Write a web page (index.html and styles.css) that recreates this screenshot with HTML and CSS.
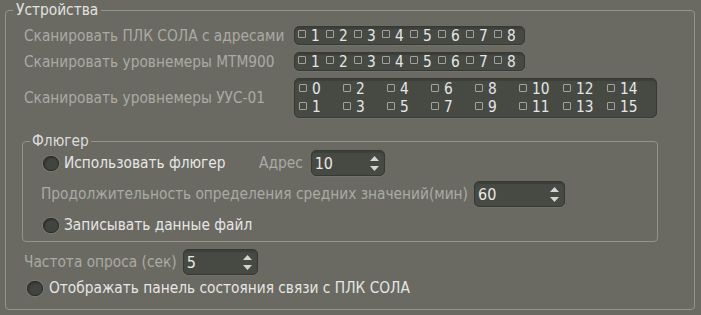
FILE: index.html
```
<!DOCTYPE html>
<html lang="ru">
<head>
    <meta charset="UTF-8">
    <title>Устройства</title>
    <link rel="stylesheet" href="styles.css">
</head>
<body>
    <fieldset class="group">
        <legend>Устройства</legend>
        <div class="group-body">
            <div class="row">
                <span class="label">Сканировать ПЛК СОЛА с адресами</span>
                <div class="addr-box">
                    <span class="addr"><span class="mini"></span>1</span>
                    <span class="addr"><span class="mini"></span>2</span>
                    <span class="addr"><span class="mini"></span>3</span>
                    <span class="addr"><span class="mini"></span>4</span>
                    <span class="addr"><span class="mini"></span>5</span>
                    <span class="addr"><span class="mini"></span>6</span>
                    <span class="addr"><span class="mini"></span>7</span>
                    <span class="addr"><span class="mini"></span>8</span>
                </div>
            </div>
            <div class="row">
                <span class="label">Сканировать уровнемеры МТМ900</span>
                <div class="addr-box">
                    <span class="addr"><span class="mini"></span>1</span>
                    <span class="addr"><span class="mini"></span>2</span>
                    <span class="addr"><span class="mini"></span>3</span>
                    <span class="addr"><span class="mini"></span>4</span>
                    <span class="addr"><span class="mini"></span>5</span>
                    <span class="addr"><span class="mini"></span>6</span>
                    <span class="addr"><span class="mini"></span>7</span>
                    <span class="addr"><span class="mini"></span>8</span>
                </div>
            </div>
            <div class="row">
                <span class="label">Сканировать уровнемеры УУС-01</span>
                <div class="addr-box addr-grid">
                    <span class="addr"><span class="mini"></span>0</span>
                    <span class="addr"><span class="mini"></span>1</span>
                    <span class="addr"><span class="mini"></span>2</span>
                    <span class="addr"><span class="mini"></span>3</span>
                    <span class="addr"><span class="mini"></span>4</span>
                    <span class="addr"><span class="mini"></span>5</span>
                    <span class="addr"><span class="mini"></span>6</span>
                    <span class="addr"><span class="mini"></span>7</span>
                    <span class="addr"><span class="mini"></span>8</span>
                    <span class="addr"><span class="mini"></span>9</span>
                    <span class="addr"><span class="mini"></span>10</span>
                    <span class="addr"><span class="mini"></span>11</span>
                    <span class="addr"><span class="mini"></span>12</span>
                    <span class="addr"><span class="mini"></span>13</span>
                    <span class="addr"><span class="mini"></span>14</span>
                    <span class="addr"><span class="mini"></span>15</span>
                </div>
            </div>

            <!-- Флюгер -->
            <fieldset class="group inner">
                <legend>Флюгер</legend>
                <div class="group-body">
                    <div class="row check-row">
                        <span class="check"></span>
                        <span class="check-label wide">Использовать флюгер</span>
                        <span class="label-inline">Адрес</span>
                        <div class="spin spin-addr">
                            <span class="value">10</span>
                            <span class="arrows">
                                <svg width="9" height="5" viewBox="0 0 9 5"><polygon points="0,5 4.5,0 9,5"/></svg>
                                <svg width="9" height="5" viewBox="0 0 9 5"><polygon points="0,0 9,0 4.5,5"/></svg>
                            </span>
                        </div>
                    </div>
                    <div class="row row-avg">
                        <span class="label-inline">Продолжительность определения средних значений(мин)</span>
                        <div class="spin spin-avg">
                            <span class="value">60</span>
                            <span class="arrows">
                                <svg width="9" height="5" viewBox="0 0 9 5"><polygon points="0,5 4.5,0 9,5"/></svg>
                                <svg width="9" height="5" viewBox="0 0 9 5"><polygon points="0,0 9,0 4.5,5"/></svg>
                            </span>
                        </div>
                    </div>
                    <div class="row check-row row-file">
                        <span class="check"></span>
                        <span class="check-label">Записывать данные файл</span>
                    </div>
                </div>
            </fieldset>

            <div class="row row-poll">
                <span class="label-inline">Частота опроса (сек)</span>
                <div class="spin spin-poll">
                    <span class="value">5</span>
                    <span class="arrows">
                        <svg width="9" height="5" viewBox="0 0 9 5"><polygon points="0,5 4.5,0 9,5"/></svg>
                        <svg width="9" height="5" viewBox="0 0 9 5"><polygon points="0,0 9,0 4.5,5"/></svg>
                    </span>
                </div>
            </div>
            <div class="row check-row row-status">
                <span class="check"></span>
                <span class="check-label">Отображать панель состояния связи с ПЛК СОЛА</span>
            </div>
        </div>
    </fieldset>
</body>
</html>
```
FILE: styles.css
```
* {
    box-sizing: border-box;
}
body {
    margin: 0;
    width: 701px;
    height: 315px;
    overflow: hidden;
    background-color: #6a6a63;
    font-family: "DejaVu Sans Condensed", "DejaVu Sans", sans-serif;
    font-stretch: condensed;
    font-size: 15.3px;
    color: #aaaaa3;
}
.group {
    margin: 1px 6px 0 5px;
    padding: 0;
    min-width: 0;
    border: 1px solid #94948d;
    border-radius: 4px;
}
.group legend {
    margin-left: 7px;
    padding: 0 3px;
    line-height: 18px;
    color: #e2e2e0;
}
.group-body {
    padding: 7px 0 8px 16px;
}
.row {
    display: flex;
    align-items: center;
    margin-left: 2px;
}
.row + .row {
    margin-top: 7px;
}
.label {
    flex: 0 0 270px;
    min-width: 0;
    white-space: nowrap;
}
.label-inline {
    white-space: nowrap;
}
.addr-box {
    display: flex;
    align-items: center;
    height: 19px;
    padding: 0 2px 0 3px;
    background: #474a43;
    border: 1px solid #373934;
    border-radius: 5px;
    box-shadow: inset 0 2px 1px rgba(0, 0, 0, 0.15), 0 1px 0 rgba(255, 255, 255, 0.06);
    color: #e4e6e8;
}
.addr {
    display: flex;
    align-items: center;
    width: 28px;
}
.addr-grid {
    display: grid;
    grid-template-rows: repeat(2, 18px);
    grid-auto-flow: column;
    grid-auto-columns: 44px;
    height: 40px;
    padding: 1px 5px 1px 4px;
}
.addr-grid .addr {
    width: 44px;
}
.mini {
    width: 8px;
    height: 8px;
    margin: 0 5px 3px 0;
    border: 1px solid #a2a29f;
    border-radius: 1px;
}
.inner {
    margin: 14px 36px 0 0;
}
.inner .group-body {
    padding: 0 0 3px 16px;
}
.inner legend {
    margin-left: 7px;
    padding: 0 2px;
    color: #dcdcda;
}
.check-row {
    padding-left: 2px;
}
.inner .row + .row {
    margin-top: 5px;
}
.inner .row-file {
    margin-top: 2px;
    height: 26px;
}
.check {
    flex: 0 0 16px;
    height: 15px;
    border-radius: 7px;
    background: #42453f;
    border: 1px solid #2b2d29;
    box-shadow: inset 1px 1px 2px rgba(0, 0, 0, 0.3), 0 0 0 1px rgba(140, 140, 132, 0.35);
}
.check-label {
    margin-left: 5px;
    color: #e6e6e4;
    white-space: nowrap;
}
.check-label.wide {
    width: 195px;
}
.spin {
    display: flex;
    align-items: center;
    height: 26px;
    padding-left: 3px;
    background: #474a43;
    border: 1px solid #363832;
    border-radius: 5px;
    box-shadow: inset 0 2px 1px rgba(0, 0, 0, 0.15), 0 1px 0 rgba(255, 255, 255, 0.06);
    color: #e8e8e6;
    font-size: 16px;
}
.spin .value {
    flex: 1;
}
.spin .arrows {
    display: flex;
    flex-direction: column;
    gap: 5px;
    margin-right: 5px;
}
.spin svg {
    display: block;
    fill: #d4d4d2;
}
.spin-addr {
    width: 74px;
    margin-left: 8px;
}
.spin-avg {
    width: 91px;
    margin-left: 6px;
}
.spin-poll {
    width: 75px;
    margin-left: 6px;
}
.row-poll {
    margin-top: 7px;
}
.row-poll + .row-status {
    margin-top: 0;
    height: 26px;
}
.row-status {
    padding-left: 3px;
}
.row-status .check-label {
    margin-left: 6px;
}
```
